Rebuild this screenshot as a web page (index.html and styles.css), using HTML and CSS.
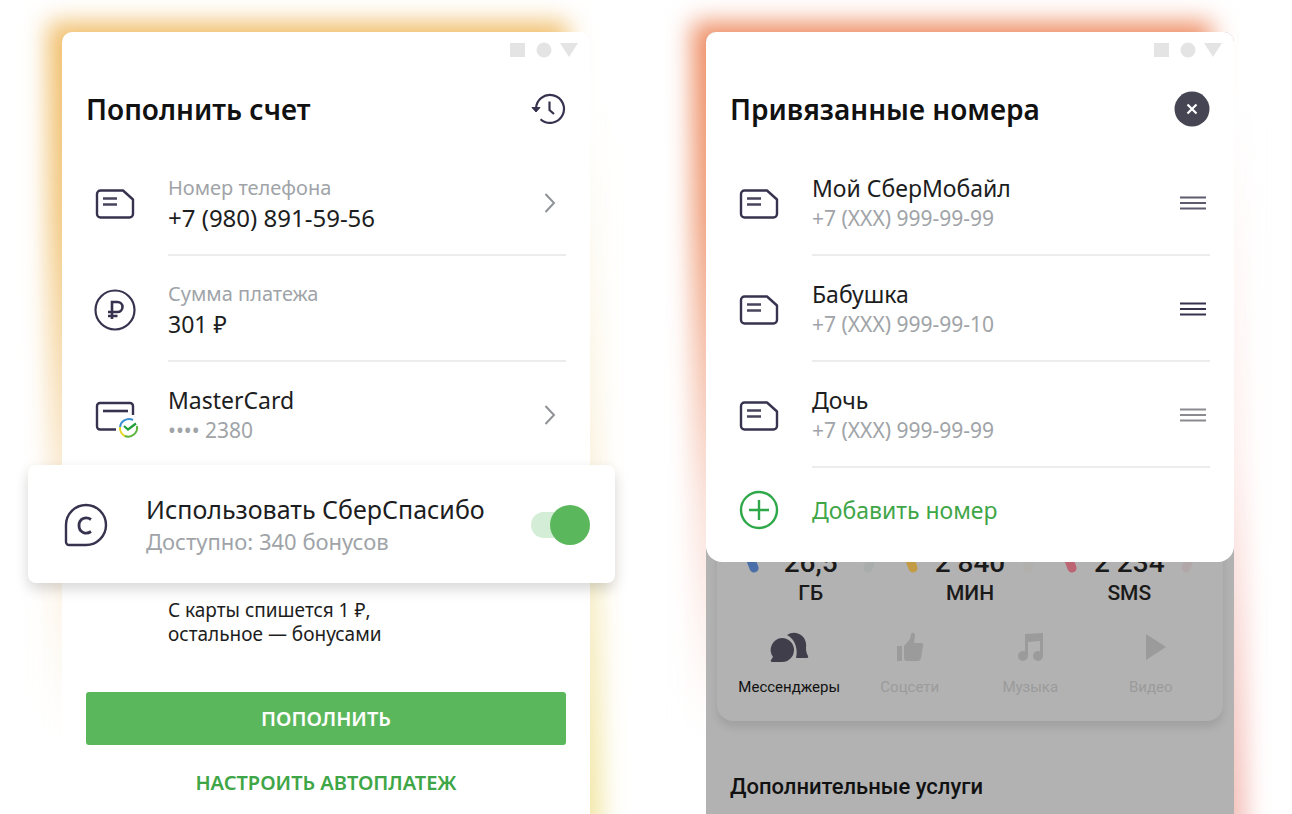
FILE: index.html
```html
<!DOCTYPE html>
<html lang="ru">
<head>
    <meta charset="UTF-8">
    <meta name="viewport" content="width=device-width, initial-scale=1.0">
    <title>СберМобайл</title>
    <link rel="stylesheet" href="styles.css">
</head>
<body>
    <svg width="0" height="0" class="sprite" aria-hidden="true">
        <symbol id="sim" viewBox="0 0 42 42">
            <path d="M6.500 7.500h22.500L39 16.500V31a3.500 3.500 0 0 1-3.500 3.500h-29A3.500 3.500 0 0 1 3 31V11a3.500 3.500 0 0 1 3.500-3.500z" fill="none" stroke="#37334f" stroke-width="2.400" stroke-linejoin="round"/>
            <path d="M9 15.500h14M9 21.500h14" stroke="#47445c" stroke-width="2.400"/>
        </symbol>
        <symbol id="status" viewBox="0 0 68 16">
            <path d="M0 1h15v14H0z"/>
            <circle cx="34" cy="8" r="7.500"/>
            <path d="M50 1h18l-9 14z"/>
        </symbol>
        <symbol id="chevron" viewBox="0 0 12 22">
            <path d="M1.500 2L10 11l-8.500 9" fill="none" stroke="#8f9296" stroke-width="2"/>
        </symbol>
        <symbol id="drag" viewBox="0 0 28 16">
            <path d="M1 2.500h26M1 8h26M1 13.500h26" stroke="currentColor" stroke-width="2.200"/>
        </symbol>
    </svg>

    <main class="screens">
        <section class="phone phone-pay">
            <div class="status-bar"><svg width="68" height="16"><use href="#status"/></svg></div>
            <header class="top">
                <h1>Пополнить счет</h1>
                <button type="button" class="icon-btn" aria-label="История">
                    <svg width="36" height="36" viewBox="0 0 36 36" fill="none" stroke="#37334f" stroke-width="2.200">
                        <path d="M6 18a14 14 0 1 1 4.500 10.200"/>
                        <path d="M2 16.500l4 4.500 4-4.500z" fill="#37334f" stroke-width="1"/>
                        <path d="M19.500 10.500v8.500l4.500 4"/>
                    </svg>
                </button>
            </header>

            <div class="row">
                <svg class="row-icon" width="42" height="42"><use href="#sim"/></svg>
                <div class="row-body">
                    <div>
                        <p class="hint">Номер телефона</p>
                        <p class="value value-phone">+7 (980) 891-59-56</p>
                    </div>
                    <svg class="chevron" width="12" height="22"><use href="#chevron"/></svg>
                </div>
            </div>
            <div class="row">
                <svg class="row-icon" width="42" height="42" viewBox="0 0 42 42" fill="none" stroke="#37334f" stroke-width="2.200">
                    <circle cx="21" cy="21" r="19.500"/>
                    <path d="M18 30V13h5.500a5 5 0 0 1 0 10H14M14 27h9.500" stroke-width="2.600"/>
                </svg>
                <div class="row-body">
                    <div>
                        <p class="hint">Сумма платежа</p>
                        <p class="value">301 ₽</p>
                    </div>
                </div>
            </div>
            <div class="row">
                <svg class="row-icon" width="42" height="42" viewBox="0 0 42 42" fill="none" stroke="#37334f" stroke-width="2.400">
                    <path d="M22 34.500H6A3 3 0 0 1 3 31.500V11a3 3 0 0 1 3-3h30a3 3 0 0 1 3 3v9"/>
                    <path d="M9 16h25" stroke-width="2.600"/>
                    <path d="M26 33a9 9 0 0 1 13-8" stroke="#3a8fd0" stroke-width="2"/>
                    <path d="M26 32a9 9 0 0 0 6 9.500" stroke="#e3d51e" stroke-width="2"/>
                    <path d="M31 41a9 9 0 0 0 12-10" stroke="#5bb53a" stroke-width="2"/>
                    <path d="M30 31l4 3.500 8-6" stroke="#21a038" stroke-width="2.200"/>
                </svg>
                <div class="row-body">
                    <div>
                        <p class="value">MasterCard</p>
                        <p class="hint hint-phone">•••• 2380</p>
                    </div>
                    <svg class="chevron" width="12" height="22"><use href="#chevron"/></svg>
                </div>
            </div>

            <label class="bonus" for="bonus">
                <svg width="44" height="44" viewBox="0 0 44 44" fill="none" stroke="#37334f" stroke-width="2.400">
                    <path d="M2 22a20 20 0 1 1 20 20H5a3 3 0 0 1-3-3z"/>
                    <path d="M27 16.500c-5-3.500-12-1-12 6s7 9.500 12 6" stroke-width="2.800"/>
                </svg>
                <span class="bonus-text">
                    <span class="bonus-title">Использовать СберСпасибо</span>
                    <span class="bonus-hint">Доступно: 340 бонусов</span>
                </span>
                <input type="checkbox" id="bonus" class="toggle" checked>
            </label>

            <p class="note">С карты спишется 1 ₽,<br>остальное — бонусами</p>

            <button type="button" class="pay-btn">ПОПОЛНИТЬ</button>
            <a href="#" class="auto-link">НАСТРОИТЬ АВТОПЛАТЕЖ</a>
        </section>

        <section class="phone phone-numbers">
            <div class="sheet">
                <div class="status-bar"><svg width="68" height="16"><use href="#status"/></svg></div>
                <header class="top">
                    <h1>Привязанные номера</h1>
                    <button type="button" class="icon-btn" aria-label="Закрыть">
                        <svg width="36" height="36" viewBox="0 0 36 36">
                            <circle cx="18" cy="18" r="17.500" fill="#464553"/>
                            <path d="M13.500 13.500l9 9M22.500 13.500l-9 9" stroke="#fff" stroke-width="2.200"/>
                        </svg>
                    </button>
                </header>

                <div class="row">
                    <svg class="row-icon" width="42" height="42"><use href="#sim"/></svg>
                    <div class="row-body">
                        <div>
                            <p class="value">Мой СберМобайл</p>
                            <p class="hint hint-phone">+7 (XXX) 999-99-99</p>
                        </div>
                        <svg class="drag" width="28" height="16"><use href="#drag"/></svg>
                    </div>
                </div>
                <div class="row">
                    <svg class="row-icon" width="42" height="42"><use href="#sim"/></svg>
                    <div class="row-body">
                        <div>
                            <p class="value">Бабушка</p>
                            <p class="hint hint-phone">+7 (XXX) 999-99-10</p>
                        </div>
                        <svg class="drag drag-dark" width="28" height="16"><use href="#drag"/></svg>
                    </div>
                </div>
                <div class="row">
                    <svg class="row-icon" width="42" height="42"><use href="#sim"/></svg>
                    <div class="row-body">
                        <div>
                            <p class="value">Дочь</p>
                            <p class="hint hint-phone">+7 (XXX) 999-99-99</p>
                        </div>
                        <svg class="drag drag-light" width="28" height="16"><use href="#drag"/></svg>
                    </div>
                </div>
                <button type="button" class="add-btn">
                    <svg class="row-icon" width="42" height="42" viewBox="0 0 42 42" fill="none" stroke="#2fa84a" stroke-width="2.400">
                        <circle cx="21" cy="21" r="18"/>
                        <path d="M21 11v20M11 21h20"/>
                    </svg>
                    <span>Добавить номер</span>
                </button>
            </div>

            <div class="usage">
                <div class="stats">
                    <div class="stat">
                        <svg width="132" height="131" viewBox="0 0 132 131" fill="none" stroke-width="9" stroke-linecap="round">
                            <path d="M9 91a62 62 0 1 1 114 0" stroke="#a9adac"/>
                            <path d="M9 91a62 62 0 0 1 57-87" stroke="#4a6fa8"/>
                        </svg>
                        <p><b>26,5</b>ГБ</p>
                    </div>
                    <div class="stat">
                        <svg width="132" height="131" viewBox="0 0 132 131" fill="none" stroke-width="9" stroke-linecap="round">
                            <path d="M9 91a62 62 0 1 1 114 0" stroke="#b2b0ac"/>
                            <path d="M9 91a62 62 0 0 1 57-87" stroke="#c39b45"/>
                        </svg>
                        <p><b>2 840</b>МИН</p>
                    </div>
                    <div class="stat">
                        <svg width="132" height="131" viewBox="0 0 132 131" fill="none" stroke-width="9" stroke-linecap="round">
                            <path d="M9 91a62 62 0 1 1 114 0" stroke="#b1a7a9"/>
                            <path d="M9 91a62 62 0 0 1 57-87" stroke="#bd6473"/>
                        </svg>
                        <p><b>2 234</b>SMS</p>
                    </div>
                </div>
                <div class="services">
                    <a href="#" class="service active">
                        <svg width="40" height="32" viewBox="0 0 40 32" fill="currentColor">
                            <path d="M18 4a12 12 0 0 1 17 3c2 3 2.500 7 2 10 0 4 1 6 2 8 .5 1 0 2-1 2H27c2-8 0-18-9-23z"/>
                            <path d="M13 7a12 12 0 0 1 0 24H3c-1 0-1.500-1-1-2l2-3A12 12 0 0 1 13 7z"/>
                        </svg>
                        Мессенджеры
                    </a>
                    <a href="#" class="service">
                        <svg width="40" height="32" viewBox="0 0 40 32" fill="currentColor">
                            <path d="M7 15h5v15H7zM14 15l6-7 1-5c.5-2 4-2 4 1.500L24 12h7c2 0 2.500 1.500 2 3l-2 12c-.5 2-1.500 3-3.500 3H17a3 3 0 0 1-3-3z"/>
                        </svg>
                        Соцсети
                    </a>
                    <a href="#" class="service">
                        <svg width="40" height="32" viewBox="0 0 40 32" fill="currentColor">
                            <path d="M15 3l18-1v23h-3V10l-12 1v14h-3z"/>
                            <circle cx="13" cy="25" r="5"/>
                            <circle cx="28" cy="25" r="5"/>
                        </svg>
                        Музыка
                    </a>
                    <a href="#" class="service">
                        <svg width="40" height="32" viewBox="0 0 40 32" fill="currentColor"><path d="M15 3l20 13-20 13z"/></svg>
                        Видео
                    </a>
                </div>
            </div>
            <h2 class="extra">Дополнительные услуги</h2>
        </section>
    </main>
</body>
</html>
```
FILE: styles.css
```css
* {
    box-sizing: border-box;
}

body {
    margin: 0;
    background: #fff;
    color: #1c1d21;
    font-family: "Noto Sans", "Open Sans", sans-serif;
}

h1, h2, p {
    margin: 0;
}

button {
    font-family: inherit;
    border: none;
    background: none;
    padding: 0;
    cursor: pointer;
}

a {
    text-decoration: none;
}

svg {
    display: block;
    flex: none;
    overflow: visible;
}

.sprite {
    position: absolute;
}

.screens {
    position: relative;
    z-index: 0;
    display: grid;
    grid-template-columns: 1fr 1fr;
    gap: 116px;
    min-height: 100vh;
    padding: 32px 58px 0 62px;
    overflow: hidden;
}

.phone {
    position: relative;
    border-radius: 10px 10px 0 0;
}

/* coloured glow behind each phone */
.phone::before,
.phone::after {
    content: "";
    position: absolute;
    z-index: -1;
    filter: blur(12px);
}

.phone::before {
    top: -10px;
    left: -14px;
    right: 22px;
    bottom: 0;
}

.phone::after {
    top: 60px;
    left: 50%;
    right: -12px;
    bottom: -20px;
}

.phone-pay {
    display: flex;
    flex-direction: column;
    padding: 0 24px;
    background: #fff;
}

.phone-pay::before {
    background: linear-gradient(#f0bd68, #f2c880 25%, #fbeedb 60%, #fff 90%);
}

.phone-pay::after {
    background: linear-gradient(#fff, #fbf3df 50%, #f1e6a0);
}

.phone-numbers {
    background: #b2b2b2;
}

.phone-numbers::before {
    background: linear-gradient(#ee8c62, #f0a07c 25%, #fae0d8 60%, #fff 90%);
}

.phone-numbers::after {
    background: linear-gradient(#fff, #fdeeec 50%, #f3b9b2);
}

.status-bar {
    display: flex;
    justify-content: flex-end;
    align-items: center;
    height: 36px;
    margin: 0 -24px;
    padding-right: 12px;
    fill: #e4e4e4;
}

.top {
    display: flex;
    justify-content: space-between;
    align-items: center;
    height: 82px;
}

.top h1 {
    font-size: 28px;
    line-height: 36px;
    font-weight: 600;
    color: #111;
}

.row,
.add-btn {
    display: grid;
    grid-template-columns: 58px 1fr;
    column-gap: 24px;
    align-items: center;
}

.row {
    padding-top: 2px;
}

.row-icon {
    justify-self: center;
}

.row-body {
    display: flex;
    justify-content: space-between;
    align-items: center;
    height: 104px;
    border-bottom: 2px solid #ececec;
}

.hint {
    font-size: 20px;
    line-height: 30px;
    color: #a0a4a8;
}

.hint-phone {
    font-size: 21px;
}

.value {
    font-size: 23px;
    line-height: 30px;
}

.value-phone {
    font-size: 24px;
}

.chevron {
    margin-right: 10px;
}

.drag {
    margin-right: 3px;
    color: #5d5b6d;
}

.drag-dark {
    color: #37334f;
}

.drag-light {
    color: #8b8b8f;
}

.bonus {
    position: relative;
    display: flex;
    align-items: center;
    height: 118px;
    margin: -3px -49px 0 -58px;
    padding: 2px 25px 0 36px;
    background: #fff;
    border-radius: 8px;
    box-shadow: 0 6px 14px rgba(0, 0, 0, 0.16);
    cursor: pointer;
}

.bonus-text {
    flex: 1;
    margin-left: 38px;
}

.bonus-title,
.bonus-hint {
    display: block;
    line-height: 32px;
}

.bonus-title {
    font-size: 25px;
}

.bonus-hint {
    font-size: 22px;
    color: #a0a4a8;
}

.toggle {
    appearance: none;
    position: relative;
    width: 59px;
    height: 40px;
    margin: 0;
    cursor: pointer;
}

.toggle::before {
    content: "";
    position: absolute;
    inset: 7px 10px 7px 0;
    border-radius: 13px;
    background: #d3edd6;
}

.toggle::after {
    content: "";
    position: absolute;
    top: 0;
    left: 0;
    width: 40px;
    height: 40px;
    border-radius: 50%;
    background: #aaa;
}

.toggle:checked::after {
    left: auto;
    right: 0;
    background: #5bb75b;
}

.note {
    margin: 15px 0 46px 82px;
    font-size: 19px;
    line-height: 24px;
}

.pay-btn {
    height: 53px;
    border-radius: 3px;
    background: #5bb75b;
    color: #fff;
    font-size: 20px;
    font-weight: 600;
}

.auto-link {
    align-self: center;
    margin-top: 22px;
    font-size: 20px;
    line-height: 32px;
    font-weight: 600;
    color: #3fa648;
}

.sheet {
    position: relative;
    z-index: 1;
    padding: 0 24px 10px;
    background: #fff;
    border-radius: 10px 10px 16px 16px;
}

.add-btn {
    width: 100%;
    height: 84px;
    color: #3fa648;
    font-size: 23px;
    line-height: 30px;
    text-align: left;
}

.usage {
    margin: -92px 11px 0;
    padding: 7px 12px 24px;
    border-radius: 0 0 16px 16px;
    background: #b2b2b2;
    box-shadow: 0 6px 8px rgba(0, 0, 0, 0.1);
    font-family: Roboto, sans-serif;
}

.stats {
    display: grid;
    grid-template-columns: repeat(3, 1fr);
    margin: 0 2px;
}

.stat {
    display: grid;
    justify-items: center;
    align-items: end;
}

.stat > * {
    grid-area: 1 / 1;
}

.stat p {
    font-size: 21px;
    line-height: 30px;
    font-weight: 500;
    text-align: center;
    color: #1a1a1a;
}

.stat b {
    display: block;
    font-size: 28px;
    font-weight: 500;
}

.services {
    display: grid;
    grid-template-columns: repeat(4, 1fr);
    margin-top: 23px;
}

.service {
    display: flex;
    flex-direction: column;
    align-items: center;
    gap: 14px;
    font-size: 15px;
    line-height: 20px;
    color: #9b9b9b;
}

.service.active {
    color: #111;
}

.service.active svg {
    color: #403e4a;
}

.extra {
    margin: 50px 24px 0;
    font-family: Roboto, sans-serif;
    font-size: 22px;
    line-height: 32px;
    font-weight: 500;
    color: #111;
}
```
